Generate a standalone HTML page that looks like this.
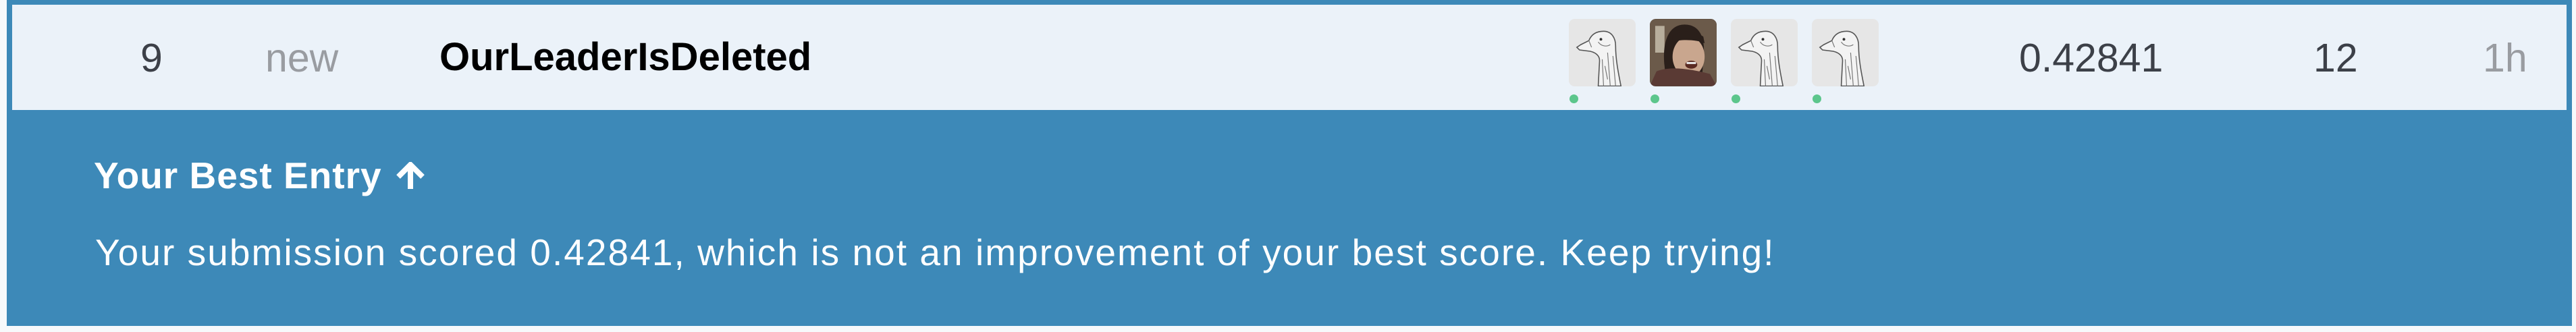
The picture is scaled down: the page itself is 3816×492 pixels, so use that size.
<!DOCTYPE html>
<html><head><meta charset="utf-8"><style>
html,body{margin:0;padding:0;width:3816px;height:492px;overflow:hidden;background:#f7f9fb;font-family:"Liberation Sans",Arial,sans-serif;}
.blue{position:absolute;left:10px;top:0;width:3800px;height:483px;background:#3d89b8;}
.row{position:absolute;left:18px;top:7px;width:3784px;height:156px;background:#ebf2f9;}
.t{position:absolute;line-height:1;white-space:nowrap;}
.av{position:absolute;top:28px;width:99px;height:100px;border-radius:9px;background:#e6e6e6;overflow:hidden;}
.dot{position:absolute;top:140px;width:13px;height:13px;border-radius:50%;background:#5cc68c;}
</style></head><body>
<div class="blue"></div>
<div class="row"></div>
<div class="t" style="left:208px;top:57px;font-size:59px;color:#3c4048;">9</div>
<div class="t" style="left:393px;top:57px;font-size:59px;color:#999ca1;">new</div>
<div class="t" style="left:651px;top:56px;font-size:58px;font-weight:bold;color:#000;">OurLeaderIsDeleted</div>

<svg style="position:absolute;left:0;top:0" width="0" height="0"><defs>
<symbol id="g" viewBox="0 0 100 100">
<rect width="100" height="100" fill="#e6e6e6"/>
<path d="M44 100 L46 62 C46 54 40 50 32 48 L16 46 L12 42 L18 38 L30 32 C34 22 42 18 52 18 C64 18 70 28 70 40 C70 60 74 80 78 100 Z" fill="#f3f3f3" stroke="#555" stroke-width="1.6"/>
<path d="M50 60 L52 100 M58 50 L62 100 M66 55 L70 100 M54 70 L58 90 M44 34 C48 40 56 42 62 38 M30 32 L34 42" stroke="#777" stroke-width="1.2" fill="none"/>
<circle cx="48" cy="30" r="2" fill="#333"/>
</symbol></defs></svg>
<div class="av" style="left:2324px;"><svg width="99" height="100"><use href="#g"/></svg></div>
<div class="av" style="left:2444px;background:#5a4a3e;">
<svg width="99" height="100" viewBox="0 0 100 100">
<rect width="100" height="100" fill="#6b5a4a"/>
<rect x="8" y="10" width="14" height="40" fill="#b8ae9c"/>
<path d="M22 70 C18 30 30 8 52 8 C76 8 84 30 80 60 L78 90 L24 95 Z" fill="#2a1f1a"/>
<ellipse cx="58" cy="56" rx="24" ry="30" fill="#c9a68e"/>
<path d="M34 34 C44 30 70 30 82 36 L80 26 C66 16 44 16 34 26 Z" fill="#2a1f1a"/>
<ellipse cx="62" cy="68" rx="9" ry="6" fill="#5a2a22"/>
<rect x="55" y="64" width="14" height="3" fill="#eee"/>
<path d="M0 100 L10 78 C30 70 60 74 90 82 L100 100 Z" fill="#5a3a34"/>
</svg></div>
<div class="av" style="left:2564px;"><svg width="99" height="100"><use href="#g"/></svg></div>
<div class="av" style="left:2684px;"><svg width="99" height="100"><use href="#g"/></svg></div>
<div class="dot" style="left:2325px;"></div>
<div class="dot" style="left:2445px;"></div>
<div class="dot" style="left:2565px;"></div>
<div class="dot" style="left:2685px;"></div>

<div class="t" style="left:2991px;top:57px;font-size:59px;color:#3c4048;">0.42841</div>
<div class="t" style="left:3427px;top:57px;font-size:59px;color:#3c4048;">12</div>
<div class="t" style="left:3678px;top:57px;font-size:59px;color:#999ca1;">1h</div>

<div class="t" style="left:139px;top:233px;font-size:55px;font-weight:bold;color:#fff;letter-spacing:1px;">Your Best Entry</div>
<svg style="position:absolute;left:584px;top:240px" width="48" height="42" viewBox="0 0 48 42">
<path d="M24 40 V6 M6 22 L24 4 L42 22" stroke="#fff" stroke-width="8" fill="none" stroke-linejoin="miter"/>
</svg>
<div class="t" style="left:141px;top:347px;font-size:55px;color:#fff;letter-spacing:2.05px;">Your submission scored 0.42841, which is not an improvement of your best score. Keep trying!</div>
</body></html>
